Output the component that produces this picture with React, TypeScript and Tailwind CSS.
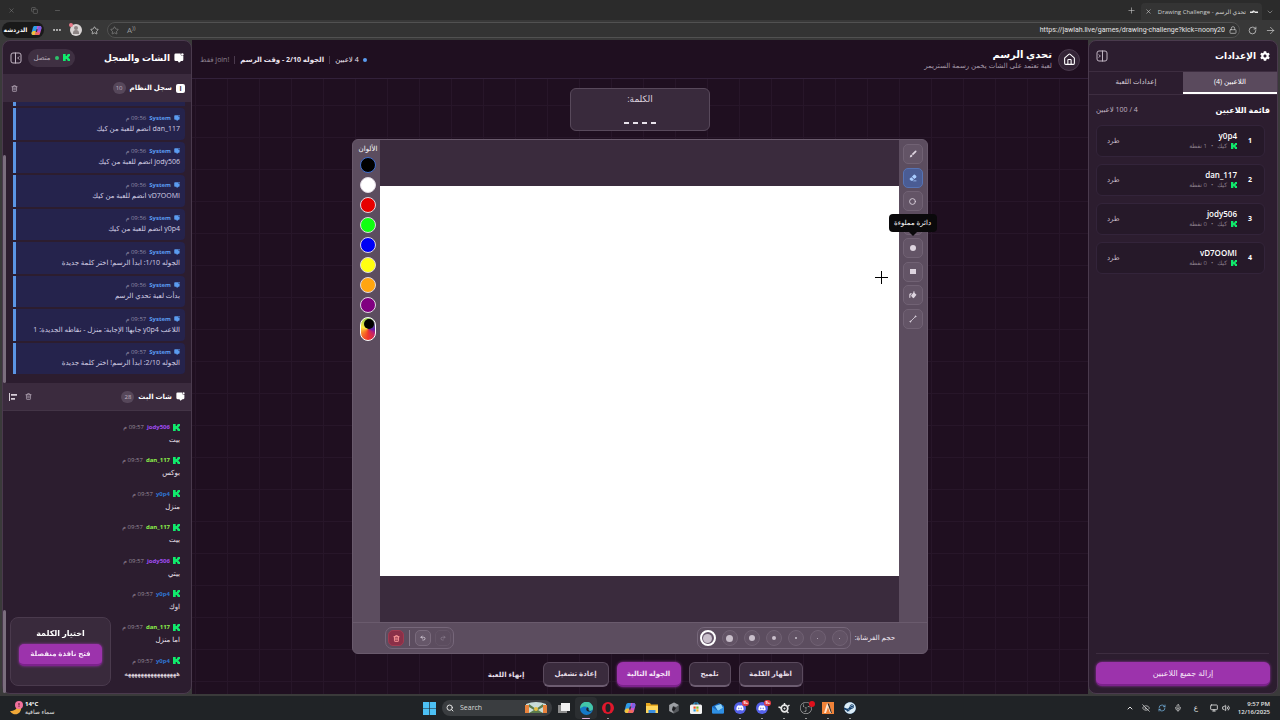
import { useState, type ReactNode } from 'react'
import clsx from 'clsx'
import {
  ArrowRight, ChevronDown, ChevronUp, Circle, Ellipsis, EyeOff, House, Lock, Mic, Minus, Monitor,
  Plus, Redo2, RefreshCw, RotateCw, Search, Square, Star, Trash2, Undo2, Volume2, X, Copy,
} from 'lucide-react'
import { FaCog, FaDiscord, FaSteam } from 'react-icons/fa'
import { SiObsstudio } from 'react-icons/si'

const players = [
  { name: 'y0p4', points: 1 },
  { name: 'dan_117', points: 0 },
  { name: 'jody506', points: 0 },
  { name: 'vD7OOMI', points: 0 },
]

const systemLog = [
  { time: '09:56', text: 'dan_117 انضم للعبة من كيك' },
  { time: '09:56', text: 'jody506 انضم للعبة من كيك' },
  { time: '09:56', text: 'vD7OOMI انضم للعبة من كيك' },
  { time: '09:56', text: 'y0p4 انضم للعبة من كيك' },
  { time: '09:56', text: 'الجوله 1/10: ابدأ الرسم! اختر كلمة جديدة' },
  { time: '09:56', text: 'بدأت لعبة تحدي الرسم' },
  { time: '09:57', text: 'اللاعب y0p4 جابها! الإجابة: منزل - نقاطه الجديدة: 1' },
  { time: '09:57', text: 'الجوله 2/10: ابدأ الرسم! اختر كلمة جديدة' },
]

const userColors: Record<string, string> = {
  jody506: 'text-[#a04cf0]',
  dan_117: 'text-[#8cf04a]',
  y0p4: 'text-[#2f74d0]',
}

const chat = [
  { user: 'jody506', text: 'بيت' },
  { user: 'dan_117', text: 'بوكس' },
  { user: 'y0p4', text: 'منزل' },
  { user: 'dan_117', text: 'بيت' },
  { user: 'jody506', text: 'بيتي' },
  { user: 'y0p4', text: 'اوك' },
  { user: 'dan_117', text: 'اما منزل' },
  { user: 'y0p4', text: 'ههههههههههههههههه' },
]

const swatches = [
  { name: 'أسود', cls: 'bg-black' },
  { name: 'أبيض', cls: 'bg-white' },
  { name: 'أحمر', cls: 'bg-[#e60000]' },
  { name: 'أخضر', cls: 'bg-[#10ff10]' },
  { name: 'أزرق', cls: 'bg-[#0000f5]' },
  { name: 'أصفر', cls: 'bg-[#ffff10]' },
  { name: 'برتقالي', cls: 'bg-[#ffa510]' },
  { name: 'بنفسجي', cls: 'bg-[#800080]' },
]

const tools: { name: string; icon: ReactNode }[] = [
  {
    name: 'فرشاة',
    icon: (
      <svg viewBox="0 0 8 8" className="size-[8px]" fill="currentColor">
        <path d="M7.300.7a.9.9 0 0 1 0 1.200L4 5.200 2.800 4 6.100.7a.9.9 0 0 1 1.200 0zM2.300 4.500l1.200 1.200C3 7 2 7.300.7 7.300c.5-.5.3-2.400 1.600-2.800z" />
      </svg>
    ),
  },
  {
    name: 'ممحاة',
    icon: (
      <svg viewBox="0 0 8 8" className="size-[8px]" fill="currentColor">
        <path d="M4.800.8a.8.8 0 0 1 1.100 0l1.300 1.300a.8.8 0 0 1 0 1.100L5.300 5.100 2.900 2.700z" />
        <path d="M2.400 3.200l2.400 2.400-1.200 1.200H2L.8 5.600a.8.8 0 0 1 0-1.100zM4.800 6.400h2.600v.8H4z" />
      </svg>
    ),
  },
  { name: 'دائرة', icon: <Circle className="size-[7px]" strokeWidth={3} /> },
  { name: 'مستطيل', icon: <Square className="size-[7px]" strokeWidth={3} /> },
  { name: 'دائرة مملوءة', icon: <span className="size-[6px] rounded-full bg-current" /> },
  { name: 'مستطيل مملوء', icon: <span className="h-[5px] w-[6px] bg-current" /> },
  {
    name: 'تعبئة',
    icon: (
      <svg viewBox="0 0 8 8" className="size-[8px]" fill="currentColor">
        <path d="M4.800 1.200l2.700 2.600-2.400 3a1 1 0 0 1-1.400 0L2.400 5.200a1 1 0 0 1 0-1.300z" />
        <path d="M4.500.3h.9V3h-.9zM.3 3.400C.5 2.500 1.500 2 3 2.300L1.400 4.200v2.400a.6.6 0 0 1-1.100 0z" />
      </svg>
    ),
  },
  {
    name: 'خط',
    icon: (
      <svg viewBox="0 0 8 8" className="size-[8px]" fill="currentColor" stroke="currentColor">
        <path d="M1.500 6.500l5-5" strokeWidth=".8" />
        <circle cx="1.400" cy="6.600" r=".5" />
        <circle cx="6.600" cy="1.400" r=".5" />
      </svg>
    ),
  },
]

const brushes = ['size-px', 'size-px', 'size-[2px]', 'size-1', 'size-[6px]', 'size-[7px]', 'size-[9px]']

function Kick({ className = 'size-[7px]' }: { className?: string }) {
  return (
    <svg viewBox="0 0 9 9" className={clsx('shrink-0', className)} fill="#10ea6c">
      <path d="M0 0h3.500v2.500H5V1h1V0h3v3H7.700v1.200H6.500v.6h1.200V6H9v3H6V8H5V6.500H3.500V9H0z" />
    </svg>
  )
}

function ChatBubble({ className }: { className: string }) {
  return (
    <svg viewBox="0 0 12 12" className={clsx('shrink-0', className)} fill="currentColor">
      <path d="M2 .5h6a2.500 2.500 0 0 0 3.200 3V8a1.500 1.500 0 0 1-1.500 1.500H8.500L6 11.800 4.500 9.500H2A1.500 1.500 0 0 1 .5 8V2A1.500 1.500 0 0 1 2 .5z" />
      <circle cx="10" cy="1.700" r="1.500" />
    </svg>
  )
}

function PanelIcon({ flip }: { flip?: boolean }) {
  return (
    <svg viewBox="0 0 12 12" className={clsx('size-3', flip && '-scale-x-100')} fill="none" stroke="currentColor" strokeWidth="1">
      <rect x="1" y="1" width="10" height="10" rx="2" />
      <path d="M5.500 .5v11M9.200 4.500L7.700 6l1.500 1.500" />
    </svg>
  )
}

function Copilot({ className }: { className: string }) {
  return (
    <svg viewBox="0 0 12 12" className={className}>
      <path d="M4 1h4L6.500 4.500 5 11H2.500C.8 11 .2 9.500.8 7.500L2 3c.4-1.300 1-2 2-2z" fill="#2f9be8" />
      <path d="M2.500 6.500h3L4.500 11h-2C.8 11 .2 9.500.8 8z" fill="#f4c13a" />
      <path d="M8 11H4l1.500-3.500L7 1h2.500c1.700 0 2.300 1.500 1.700 3.500L10 9c-.4 1.300-1 2-2 2z" fill="#d054c8" />
      <path d="M7 6l1.500-5h1c1.700 0 2.300 1.500 1.700 3L10.500 6z" fill="#7a62e8" />
      <path d="M4 11l1.500-3.500L9.800 8.500C9.400 10.300 9 11 8 11z" fill="#f06a5c" />
      <path d="M5.800 4.500h1.500l-.8 3H5z" fill="#383838" />
    </svg>
  )
}

function BrowserChrome() {
  return (
    <header className="shrink-0 text-[#d0d0d0]">
      <div className="flex h-5 items-end bg-[#2b2b2b] pr-[2px]">
        <button aria-label="علامات التبويب" className="flex h-[17px] w-4 items-center justify-center text-[#a0a0a0]"><ChevronDown className="size-[8px]" /></button>
        <div className="flex h-[17px] w-[121px] items-center gap-1 overflow-hidden rounded-t bg-[#343434] px-1">
          <svg viewBox="0 0 8 4" className="w-2 shrink-0" fill="#e8e8e8"><path d="M0 1.500h2L3 .5h1l1 1h3v1.500H5V2.500H3V3H0z" /></svg>
          <span className="flex-1 overflow-hidden text-[6px] leading-3 whitespace-nowrap">تحدي الرسم - <bdi>Drawing Challenge</bdi> |</span>
          <button aria-label="إغلاق التبويب"><X className="size-[7px]" /></button>
        </div>
        <button aria-label="تبويب جديد" className="flex h-[19px] w-5 items-center justify-center"><Plus className="size-[9px]" strokeWidth={1.5} /></button>
        <div className="mr-auto flex h-5 items-center gap-4 pl-2 text-[#8c8c8c]">
          <button aria-label="تصغير"><Minus className="size-[7px]" strokeWidth={1.5} /></button>
          <button aria-label="استعادة"><Copy className="size-[7px]" strokeWidth={1.5} /></button>
          <button aria-label="إغلاق"><X className="size-[7px]" strokeWidth={1.5} /></button>
        </div>
      </div>
      <div className="flex h-5 items-center gap-2 bg-[#383838] pr-1 pl-[2px]">
        <button aria-label="التالي"><ArrowRight className="size-[11px]" strokeWidth={1.5} /></button>
        <button aria-label="تحديث"><RotateCw className="size-[9px]" /></button>
        <div className="flex h-4 flex-1 items-center gap-1 rounded-full border border-[#515151] bg-[#333] px-[2px]">
          <Lock className="size-[8px]" />
          <input
            dir="ltr"
            aria-label="العنوان"
            className="min-w-0 flex-1 bg-transparent text-right font-['Roboto','DejaVu_Sans',sans-serif] text-[7px] text-[#e4e4e4]"
            defaultValue="https://jawlah.live/games/drawing-challenge?kick=noony20"
          />
          <span dir="ltr" className="ml-1 text-[8px] leading-3 text-[#9a9a9a]">A<sup>))</sup></span>
          <Star className="size-[9px] text-[#9a9a9a]" strokeWidth={1.5} />
        </div>
        <Star className="size-[9px]" strokeWidth={2} />
        <span className="relative size-3 rounded-full bg-[#d8d4d4]">
          <span className="absolute top-[2px] left-1 size-1 rounded-full bg-[#8c8484]" />
          <span className="absolute bottom-[2px] left-[3px] h-1 w-[6px] rounded-t-full bg-[#8c8484]" />
          <span className="absolute -top-px -left-px size-1 rounded-full bg-[#e87a8a]" />
        </span>
        <button aria-label="المزيد"><Ellipsis className="size-[10px]" strokeWidth={3} /></button>
        <button className="flex h-4 w-[42px] items-center justify-center gap-1 rounded-full bg-[#191919] text-[6px] leading-3 font-bold text-white">
          <Copilot className="size-[11px] shrink-0" />
          الدردشة
        </button>
      </div>
    </header>
  )
}

function SettingsPanel() {
  const [tab, setTab] = useState('players')
  return (
    <aside className="flex w-[190px] shrink-0 flex-col rounded-lg border border-[#4a3a4d] bg-[#2c1d2f]">
      <div className="flex h-[30px] shrink-0 items-center gap-1 px-[7px]">
        <FaCog className="size-[10px] text-white" />
        <h2 className="text-[9px] leading-4 font-bold text-white">الإعدادات</h2>
        <button aria-label="طي الإعدادات" className="mr-auto text-[#c0b4c2]"><PanelIcon flip /></button>
      </div>
      <div role="tablist" className="grid h-6 shrink-0 grid-cols-2 border-y border-[#3d2d40] text-[7px] leading-3">
        {[['players', 'اللاعبين (4)'], ['settings', 'إعدادات اللعبة']].map(([key, label]) => (
          <button
            key={key}
            role="tab"
            aria-selected={tab === key}
            onClick={() => setTab(key)}
            className={clsx('border-b-2', tab === key ? 'border-white bg-[#5a4a5d] text-white' : 'border-transparent text-[#d8ced9]')}
          >
            {label}
          </button>
        ))}
      </div>
      <div className="flex h-[30px] shrink-0 items-center justify-between px-[7px]">
        <h3 className="text-[8px] leading-4 font-bold text-white">قائمة اللاعبين</h3>
        <span className="text-[7px] leading-3 text-[#c0b4c2]">4 / 100 لاعبين</span>
      </div>
      <ul className="flex flex-1 flex-col gap-[7px] pr-3 pl-[7px]">
        {players.map((p, i) => (
          <li key={p.name} className="flex h-8 items-center rounded-md border border-[#33243a] bg-[#261929] px-2">
            <span className="w-3 text-center text-[7px] font-bold text-white">{i + 1}</span>
            <div className="mr-[7px]">
              <div className="text-[8px] leading-[10px] font-semibold text-white">{p.name}</div>
              <div className="flex items-center gap-1 text-[6px] leading-[10px] text-[#8c808e]">
                <Kick className="size-[6px]" />
                <span>كيك</span>
                <span>•</span>
                <span>{p.points} نقطة</span>
              </div>
            </div>
            <button className="mr-auto ml-[2px] text-[7px] leading-3 text-[#c8bcc9]">طرد</button>
          </li>
        ))}
      </ul>
      <div className="mr-2 ml-[7px] border-t border-[#3d2d40]" />
      <div className="flex px-[7px] pt-2 pb-[7px]">
        <button className="h-6 flex-1 rounded-md border-b-2 border-[#7c228c] bg-[#9c33ac] text-[8px] leading-3 text-[#f6e6f8] shadow-[0_0_3px_#9c33ac]">
          إزالة جميع اللاعبين
        </button>
      </div>
    </aside>
  )
}

function DrawingBoard() {
  const [color, setColor] = useState(0)
  const [tool, setTool] = useState(1)
  const [size, setSize] = useState(6)
  return (
    <section className="flex min-h-0 w-144 flex-1 flex-col rounded-md border border-[#695a6c] bg-[#5c4d5f]">
      <div className="flex min-h-0 flex-1">
        <div className="flex w-7 shrink-0 flex-col items-center pt-1 pr-px">
          <div className="relative flex h-[185px] flex-col justify-between">
            {tools.map((t, i) => (
              <button
                key={t.name}
                aria-label={t.name}
                onClick={() => setTool(i)}
                className={clsx(
                  'flex size-5 items-center justify-center rounded-[5px] border',
                  tool === i ? 'border-[#5673b4] bg-[#4a5c94] text-[#a8ccff]' : 'border-[#716274] bg-[#635466] text-[#ddd4df]'
                )}
              >
                {t.icon}
              </button>
            ))}
            <div role="tooltip" className="absolute top-[70px] left-1/2 z-10 w-12 -translate-x-1/2 rounded bg-[#0a090b] py-[3px] text-center text-[7px] leading-3 text-white">
              دائرة مملوءة
              <span className="absolute top-full left-1/2 -translate-x-1/2 border-x-4 border-t-4 border-x-transparent border-t-[#0a090b]" />
            </div>
          </div>
        </div>
        <div className="relative flex flex-1 items-center bg-[#3a2b3d]">
          <canvas className="aspect-[4/3] w-full bg-white" />
          <svg viewBox="0 0 13 13" className="absolute top-[131px] right-[11px] size-[13px]" stroke="#000">
            <path d="M6.500 0v13M0 6.500h13" strokeWidth="1" />
          </svg>
        </div>
        <div className="flex w-[27px] shrink-0 flex-col items-center gap-1 pl-[3px]">
          <span className="mt-1 text-[7px] leading-[9px] whitespace-nowrap text-white">الألوان</span>
          {swatches.map((s, i) => (
            <button
              key={s.name}
              aria-label={s.name}
              onClick={() => setColor(i)}
              className={clsx('size-4 shrink-0 rounded-full border', color === i ? 'border-[#3f6fd0]' : 'border-[#e2dae4]', s.cls)}
            />
          ))}
          <label className="relative h-6 w-4 shrink-0 rounded-full border border-white bg-[conic-gradient(#8cc850,#5a1cb0_25%,#c02070_35%,#f03828_50%,#f88028_65%,#ffe840_80%,#8cc850)]">
            <span className="absolute top-px right-px size-[10px] rounded-full bg-black" />
            <input type="color" aria-label="لون مخصص" className="absolute inset-0 size-full opacity-0" />
          </label>
        </div>
      </div>
      <div className="flex h-[31px] shrink-0 items-center border-t border-[#6a5b6d] px-8">
        <span className="text-[7px] leading-3 text-[#f0e8f2]">حجم الفرشاة:</span>
        <div className="mr-1 flex h-[22px] items-center gap-[6px] rounded-[7px] border border-[#76677a] px-[2px]">
          {brushes.map((b, i) => (
            <button
              key={i}
              aria-label={`حجم ${i + 1}`}
              onClick={() => setSize(i)}
              className={clsx('flex size-4 items-center justify-center rounded-full', size === i ? 'border-2 border-white bg-[#65566a]' : 'border border-[#706173] bg-[#625365]')}
            >
              <span className={clsx('shrink-0 rounded-full bg-[#c9bfcb]', b)} />
            </button>
          ))}
        </div>
        <div className="mr-auto flex h-[22px] items-center gap-1 rounded-[7px] border border-[#76677a] px-[2px] text-[#ded4e0]">
          <button aria-label="إعادة" disabled className="flex size-4 items-center justify-center rounded-[5px] border border-[#645567] text-[#8a7c8d]"><Redo2 className="size-[6px]" strokeWidth={3} /></button>
          <button aria-label="تراجع" className="flex size-4 items-center justify-center rounded-[5px] border border-[#7a6b7d] bg-[#665769]"><Undo2 className="size-[6px]" strokeWidth={3} /></button>
          <span className="mx-px h-4 w-px bg-[#887a8b]" />
          <button aria-label="مسح الكل" className="flex size-4 items-center justify-center rounded-[5px] border border-[#a03a50] bg-[#8a3048] text-[#ff9c9c]"><Trash2 className="size-[7px]" strokeWidth={3} /></button>
        </div>
      </div>
    </section>
  )
}

const actionBtn = 'h-[25px] rounded-md border border-[#5a4a5d] border-b-[#6c5c70] border-b-2 bg-[#3a2b3d] text-[7px] leading-3 font-bold text-[#e6dee8]'

function GameArea() {
  return (
    <main className="flex min-w-0 flex-1 flex-col items-center bg-[#1f0f20] bg-[linear-gradient(#271629_1px,transparent_1px),linear-gradient(90deg,#271629_1px,transparent_1px)] bg-size-[32px_32px] bg-position-[3px_1px]">
      <div className="flex h-[39px] w-full shrink-0 items-center border-b border-[#32213a] bg-[#1f0f20] px-2 pt-px">
        <a href="#home" aria-label="الرئيسية" className="flex size-[22px] items-center justify-center rounded-full border border-[#4a3a4d] bg-[#332436] text-white">
          <House className="size-[13px]" />
        </a>
        <div className="mr-[6px]">
          <h1 className="text-[10px] leading-3 font-bold text-white">تحدي الرسم</h1>
          <p className="text-[7px] leading-3 text-[#a598a8]">لعبة تعتمد على الشات يخمن رسمة الستريمر</p>
        </div>
        <div className="mr-auto flex items-center gap-1 text-[7px] leading-3 text-[#ece4ee]">
          <span className="size-1 rounded-full bg-[#5a9cf0]" />
          <span>4 لاعبين</span>
          <span className="mx-px h-2 w-px bg-[#4a3a4d]" />
          <span className="font-bold">الجوله 2/10 - وقت الرسم</span>
          <span className="mx-px h-2 w-px bg-[#4a3a4d]" />
          <span className="text-[#8c808e]">!join فقط</span>
        </div>
      </div>
      <div className="mt-[9px] mb-2 flex h-[43px] w-35 shrink-0 flex-col items-center justify-between rounded-md border border-[#58495b] bg-[#392a3c] pt-1 pb-[6px]">
        <span className="text-[9px] leading-3 text-[#ddd3df]">الكلمة:</span>
        <div className="flex gap-1">
          {[0, 1, 2, 3].map(n => <span key={n} className="h-[2px] w-[5px] bg-[#e8e2ea]" />)}
        </div>
      </div>
      <DrawingBoard />
      <div className="mt-2 mb-[7px] flex shrink-0 items-center gap-2">
        <button className={clsx(actionBtn, 'w-16')}>اظهار الكلمة</button>
        <button className={clsx(actionBtn, 'w-[42px]')}>تلميح</button>
        <button className="h-[25px] w-16 rounded-md border-b-2 border-[#7c228c] bg-[#9c33ac] text-[7px] leading-3 font-bold text-[#f6e6f8] shadow-[0_0_3px_#9c33ac]">الجوله التالية</button>
        <button className={clsx(actionBtn, 'w-[66px]')}>إعادة تشغيل</button>
        <button className="h-[25px] w-[57px] text-[7px] leading-3 font-bold text-[#e6dee8]">إنهاء اللعبة</button>
      </div>
    </main>
  )
}

function ChatPanel() {
  return (
    <aside className="relative flex w-[190px] shrink-0 flex-col rounded-lg border border-[#4a3a4d] bg-[#2c1d2f]">
      <div className="flex h-[33px] shrink-0 items-center px-[7px]">
        <ChatBubble className="size-[10px] text-white" />
        <h2 className="mr-1 text-[9px] leading-4 font-bold text-white">الشات والسجل</h2>
        <span className="mr-auto flex h-[18px] w-[47px] items-center justify-center gap-1 rounded-full bg-[#3f3042] text-[7px] leading-3 text-[#b5a8b7]">
          <Kick />
          <span className="size-1 rounded-full bg-[#2fc06a]" />
          متصل
        </span>
        <button aria-label="طي الشات" className="mr-[6px] text-[#c0b4c2]"><PanelIcon /></button>
      </div>
      <div className="flex h-7 shrink-0 items-center bg-[#3b2b3e] px-[6px]">
        <span className="flex size-[9px] items-center justify-center rounded-[2px] bg-white text-[7px] leading-none font-bold text-[#3b2b3e]">i</span>
        <h3 className="mr-1 text-[7px] leading-3 font-bold text-white">سجل النظام</h3>
        <span className="mr-1 rounded-full bg-[#56475a] px-[3px] text-[6px] leading-3 text-[#c0b4c2]">10</span>
        <button aria-label="مسح السجل" className="mr-auto ml-[2px] text-[#b5a8b7]"><Trash2 className="size-[7px]" strokeWidth={2.5} /></button>
      </div>
      <div className="relative flex h-[281px] shrink-0 flex-col gap-[2px] pr-[6px] pb-[9px] pl-[10px]">
        <div className="h-1 shrink-0 border-l-[3px] border-[#5b95e4] bg-[#25234c]" />
        {systemLog.map((m, i) => (
          <div key={i} className="flex min-h-0 flex-1 flex-col justify-center rounded-r border-l-[3px] border-[#5b95e4] bg-[#25234c] pr-[5px]">
            <div className="flex items-center gap-[3px] text-[6px] leading-[10px]">
              <ChatBubble className="size-[6px] text-[#5b9cf0]" />
              <span className="font-bold text-[#5b9cf0]">System</span>
              <span className="text-[#8f8aa6]">{m.time} م</span>
            </div>
            <p className="text-[7px] leading-3 whitespace-nowrap text-[#d4d0e6]">{m.text}</p>
          </div>
        ))}
        <span className="absolute bottom-0 left-0 h-[228px] w-[3px] rounded bg-[#7b6e7e]" />
      </div>
      <div className="flex h-7 shrink-0 items-center border-b border-[#433446] bg-[#3b2b3e] px-[6px]">
        <ChatBubble className="size-[9px] text-white" />
        <h3 className="mr-1 text-[7px] leading-3 font-bold text-white">شات البث</h3>
        <span className="mr-1 rounded-full bg-[#56475a] px-[3px] text-[6px] leading-3 text-[#c0b4c2]">28</span>
        <button aria-label="مسح الشات" className="mr-auto text-[#b5a8b7]"><Trash2 className="size-[7px]" strokeWidth={2.5} /></button>
        <button aria-label="محاذاة" className="mr-2 text-[#d8ced9]">
          <svg viewBox="0 0 8 8" className="size-2" fill="currentColor"><path d="M0 0h1v8H0zM2 1h6v1.800H2zM2 5h4v1.800H2z" /></svg>
        </button>
      </div>
      <div className="relative flex min-h-0 flex-1 flex-col pt-[10px] pr-[11px] pb-[5px]">
        {chat.map((m, i) => (
          <div key={i} className="flex min-h-0 flex-1 flex-col">
            <div className="flex items-center gap-[3px] text-[6px] leading-3">
              <Kick className="size-[7px]" />
              <span className={clsx('font-bold', userColors[m.user])}>{m.user}</span>
              <span className="text-[#968a98]">09:57 م</span>
            </div>
            <p className="text-[7px] leading-[14px] text-[#ece4ee]">{m.text}</p>
          </div>
        ))}
        <span className="absolute bottom-0 left-0 h-[83px] w-[3px] rounded bg-[#7b6e7e]" />
      </div>
      <div className="absolute bottom-[7px] left-[7px] flex h-[69px] w-[101px] flex-col items-center rounded-lg border border-[#4a3a4d] bg-[#3a2b3d]/95 px-2 pt-2 backdrop-blur-sm">
        <h3 className="text-[8px] leading-[14px] font-bold text-white">اختيار الكلمة</h3>
        <button className="mt-1 h-[22px] w-full rounded-[5px] border-b-2 border-[#7c228c] bg-[#9c33ac] text-[7px] leading-3 font-bold text-[#f6e6f8] shadow-[0_0_3px_#9c33ac]">فتح نافذة منفصلة</button>
      </div>
    </aside>
  )
}

const taskApps: { name: string; dot?: boolean; active?: boolean; icon: ReactNode }[] = [
  {
    name: 'Task View',
    icon: <svg viewBox="0 0 12 12" className="size-3"><path d="M0 3h9v8H0z" fill="#8c8c8c" /><path d="M3 1h9v8H3z" fill="#f0f0f0" /></svg>,
  },
  {
    name: 'Edge',
    dot: true,
    active: true,
    icon: (
      <svg viewBox="0 0 12 12" className="size-[13px]">
        <circle cx="6" cy="6" r="6" fill="#1579c8" />
        <path d="M0 6a6 6 0 0 1 12-.5C12 7.500 10.500 8.500 8.500 8 9.500 5 5 3.500 2.500 4.500 1.200 5 .4 5.500 0 6z" fill="#43c6a8" />
        <path d="M7 8.500c-1-.4-1.600-1.500-1-2.700.4-.8 1.200-.8 1.700-.3C8.200 6.500 7 7.300 8.500 8c1 .5 2.400.3 3-.4-.8 1.300-3 1.600-4.500.9z" fill="#202326" />
      </svg>
    ),
  },
  {
    name: 'Opera',
    dot: true,
    icon: <svg viewBox="0 0 12 12" className="size-3"><circle cx="6" cy="6" r="6" fill="#e0182c" /><ellipse cx="6" cy="6" rx="2.500" ry="4.200" fill="#202326" /></svg>,
  },
  { name: 'Copilot', icon: <Copilot className="size-3" /> },
  {
    name: 'Explorer',
    icon: <svg viewBox="0 0 12 12" className="size-3"><path d="M0 1h4l1 1.500h7V11H0z" fill="#e8a820" /><path d="M0 4h12v7H0z" fill="#ffd65c" /><path d="M2.500 8h7v3h-7z" fill="#3b8fe0" /></svg>,
  },
  {
    name: 'Cube',
    icon: <svg viewBox="0 0 12 12" className="size-3"><path d="M6 .5L10.800 3v6L6 11.500 1.200 9V3z" fill="#55585c" /><path d="M6 .5L10.800 3 8 5 5 4 4 8l2 3.500L1.200 9V3z" fill="#9c9fa3" /><path d="M5 4.500l3 1.500-2 3-2-1z" fill="#1c1d20" /></svg>,
  },
  {
    name: 'Store',
    icon: (
      <svg viewBox="0 0 12 12" className="size-3">
        <path d="M4 3V1h4v2" fill="none" stroke="#36a8e8" />
        <rect y="2.500" width="12" height="9.500" rx="1.500" fill="#f2f2f2" />
        <path d="M3.500 4.500h2.200v2.200H3.500z" fill="#f04c28" /><path d="M6.300 4.500h2.200v2.200H6.300z" fill="#7cb92a" />
        <path d="M3.500 7.300h2.200v2.200H3.500z" fill="#2a9ce0" /><path d="M6.300 7.300h2.200v2.200H6.300z" fill="#fbb81a" />
      </svg>
    ),
  },
  {
    name: 'Mail',
    icon: <svg viewBox="0 0 12 12" className="size-3"><path d="M0 4.500L7 1l5 3v6.500a1 1 0 0 1-1 1H1a1 1 0 0 1-1-1z" fill="#1668c0" /><path d="M3 4l6-2 2 4-5 3z" fill="#8cd2f8" /><path d="M0 5l6 4 6-4v5.500a1 1 0 0 1-1 1H1a1 1 0 0 1-1-1z" fill="#2f90e4" /></svg>,
  },
  { name: 'Discord', dot: true, icon: <DiscordIcon /> },
  { name: 'Discord PTB', dot: true, icon: <DiscordIcon /> },
  {
    name: 'SteelSeries',
    dot: true,
    icon: (
      <svg viewBox="0 0 12 12" className="size-3" fill="none" stroke="#e8e8e8">
        <circle cx="6.500" cy="6.500" r="3.300" strokeWidth="1.700" />
        <circle cx="6.500" cy="6.500" r=".6" fill="#e8e8e8" />
        <path d="M6.500 1v2M.5 5l3 1M9.500 4.500l2-1.500M9 9.500l1.500 1.500" strokeWidth="1.400" />
      </svg>
    ),
  },
  {
    name: 'OBS',
    dot: true,
    icon: <span className="relative"><SiObsstudio className="size-3 text-[#b8b8b8]" /><span className="absolute -top-px -right-[3px] size-[6px] rounded-full bg-[#e0101c]" /></span>,
  },
  {
    name: 'FiveM',
    dot: true,
    icon: <svg viewBox="0 0 12 12" className="size-3"><path d="M0 0h12v12H0z" fill="#f08238" /><path d="M2 11L5 1.500h2L10 11H8L6 5l-2 6z" fill="#ffe6d0" /><path d="M5.500 1.500L9 11h1L7 1.500z" fill="#33251c" /></svg>,
  },
  { name: 'Steam', dot: true, icon: <span className="rounded-full bg-[#14406e]"><FaSteam className="size-3 text-[#dcecf6]" /></span> },
]

function DiscordIcon() {
  return (
    <span className="relative flex size-3 items-center justify-center rounded-full bg-[#5562ea]">
      <FaDiscord className="size-2 text-white" />
      <span className="absolute -top-[2px] -right-[3px] rounded-full bg-[#e03a44] px-px text-[4px] leading-[6px] font-bold text-white">9+</span>
    </span>
  )
}

function Taskbar() {
  return (
    <footer dir="ltr" className="grid h-6 shrink-0 grid-cols-[1fr_auto_1fr] items-center bg-[#202326] text-[7px] text-[#e4e4e4]">
      <div className="flex items-center gap-[2px] pl-[10px]">
        <svg viewBox="0 0 13 14" className="h-[14px] w-[13px]">
          <path d="M10.500 5a5.500 5.500 0 0 1-10.500 5C4 10 7 8.500 7.500 4z" fill="#f0a838" />
          <circle cx="9" cy="4" r="4" fill="#f0709c" />
          <path d="M9 2v2.500M9 5.200v.8" stroke="#50182c" />
        </svg>
        <div className="text-[6px] leading-2">
          <div className="font-bold text-white">14°C</div>
          <div dir="rtl">سماء صافية</div>
        </div>
      </div>
      <div className="flex items-center pl-1">
        <button aria-label="Start" className="mr-[6px]">
          <svg viewBox="0 0 12 12" className="size-[13px]" fill="#4cc0f4"><path d="M0 0h5.700v5.700H0zM6.300 0H12v5.700H6.300zM0 6.300h5.700V12H0zM6.300 6.300H12V12H6.300z" /></svg>
        </button>
        <label className="mr-px flex h-4 w-[110px] items-center gap-[6px] overflow-hidden rounded-full bg-[#3a3d40] px-1">
          <Search className="size-2 shrink-0" strokeWidth={3} />
          <input aria-label="Search" placeholder="Search" className="w-0 flex-1 bg-transparent text-[7px] placeholder:text-[#d8d8d8]" />
          <svg viewBox="0 0 24 12" className="h-3 w-6">
            <path d="M2 2q10-4 20 0v9H2z" fill="#c8dcd8" />
            <path d="M1 3h4v8H1zM19 3h4v8h-4z" fill="#e8823c" />
            <path d="M5 2l7 5 7-5v3l-5 3 5 3H5l5-3-5-3z" fill="#5c7c4c" />
            <circle cx="12" cy="7" r="2" fill="#e8c040" />
          </svg>
        </label>
        {taskApps.map(a => (
          <button key={a.name} aria-label={a.name} className={clsx('relative flex h-[22px] w-[22px] items-center justify-center rounded', a.active && 'bg-[#2b2e31]')}>
            {a.icon}
            {a.dot && <span className={clsx('absolute bottom-0 h-px rounded', a.active ? 'w-2 bg-[#e0b0dc]' : 'w-[2px] bg-[#a8a8a8]')} />}
          </button>
        ))}
      </div>
      <div className="flex items-center justify-end pr-[10px]">
        <div className="flex items-center gap-2">
          <ChevronUp className="size-2" strokeWidth={3} />
          <EyeOff className="size-2" />
          <RefreshCw className="size-2 text-[#7cc0f0]" />
          <Mic className="size-2" />
        </div>
        <span className="mx-3 leading-3">ع</span>
        <div className="flex items-center gap-1">
          <Monitor className="size-2" strokeWidth={2.5} />
          <Volume2 className="size-2" strokeWidth={2.5} />
        </div>
        <div className="ml-2 text-right text-[6px] leading-2 font-semibold">
          <div>9:57 PM</div>
          <div>12/16/2025</div>
        </div>
      </div>
    </footer>
  )
}

export default function App() {
  return (
    <div dir="rtl" className="flex h-screen min-h-[600px] flex-col bg-[#3a3a3a] font-['Open_Sans','DejaVu_Sans',sans-serif]">
      <BrowserChrome />
      <div className="flex min-h-0 flex-1 px-[2px] pb-[2px]">
        <SettingsPanel />
        <GameArea />
        <ChatPanel />
      </div>
      <Taskbar />
    </div>
  )
}
